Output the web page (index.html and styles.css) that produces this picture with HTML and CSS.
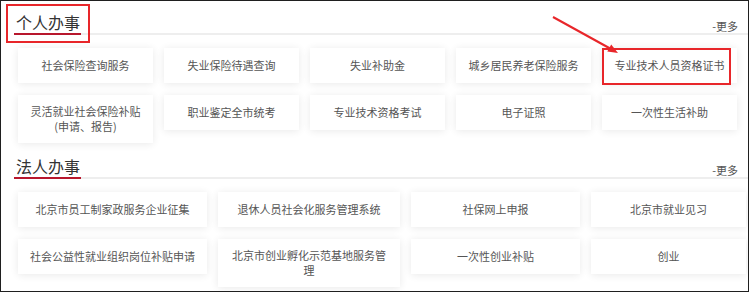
FILE: index.html
```html
<!DOCTYPE html>
<html lang="zh-CN">
<head>
<meta charset="utf-8">
<title>办事</title>
<link rel="stylesheet" href="styles.css">
</head>
<body>
<div class="frame">
  <section class="sec sec-1">
    <div class="sec-head">
      <h2 class="sec-title">个人办事</h2>
      <a class="more">-更多</a>
    </div>
    <div class="grid grid-5">
      <div class="card">社会保险查询服务</div>
      <div class="card">失业保险待遇查询</div>
      <div class="card">失业补助金</div>
      <div class="card">城乡居民养老保险服务</div>
      <div class="card">专业技术人员资格证书</div>
      <div class="card">灵活就业社会保险补贴<br>(申请、报告)</div>
      <div class="card">职业鉴定全市统考</div>
      <div class="card">专业技术资格考试</div>
      <div class="card">电子证照</div>
      <div class="card">一次性生活补助</div>
    </div>
  </section>
  <section class="sec sec-2">
    <div class="sec-head">
      <h2 class="sec-title">法人办事</h2>
      <a class="more">-更多</a>
    </div>
    <div class="grid grid-4">
      <div class="card">北京市员工制家政服务企业征集</div>
      <div class="card">退休人员社会化服务管理系统</div>
      <div class="card">社保网上申报</div>
      <div class="card">北京市就业见习</div>
      <div class="card">社会公益性就业组织岗位补贴申请</div>
      <div class="card">北京市创业孵化示范基地服务管<br>理</div>
      <div class="card">一次性创业补贴</div>
      <div class="card">创业</div>
    </div>
  </section>
  <div class="mark mark-title"></div>
  <div class="mark mark-card"></div>
  <svg class="arrow" width="747" height="290" viewBox="0 0 747 290">
    <line x1="552" y1="16" x2="610" y2="48" stroke="#e8262a" stroke-width="2"/>
    <polygon points="617,52 606.3,50.6 610.2,43.6" fill="#e8262a"/>
  </svg>
</div>
</body>
</html>
```
FILE: styles.css
```css
html, body {
  margin: 0;
  padding: 0;
  background: #fff;
}
body {
  font-family: "Noto Sans CJK SC", "Noto Sans", sans-serif;
}
.frame {
  position: relative;
  width: 734px;
  height: 290px;
  padding-left: 13px;
  border: 1px solid #1f1f1f;
  background: #fff;
  overflow: hidden;
}
.sec-1 {
  margin-top: 12px;
}
.sec-2 {
  margin-top: 14px;
}
.sec-head {
  display: flex;
  justify-content: space-between;
  align-items: flex-end;
  border-bottom: 2px solid #eeeeee;
  padding-right: 10px;
}
.sec-title {
  margin: 0 0 -2px 0;
  padding: 0 1px 2px 2px;
  font-size: 16px;
  line-height: 18px;
  font-weight: normal;
  color: #333;
  border-bottom: 2px solid #b8172d;
}
.more {
  font-size: 11px;
  line-height: 14px;
  color: #555;
  text-decoration: none;
}
.grid {
  display: grid;
  gap: 12px 11px;
  align-items: start;
  margin: 13px 0 0 4px;
}
.grid-5 {
  grid-template-columns: repeat(5, 135px);
}
.grid-4 {
  grid-template-columns: 189px 182px 169px 155px;
}
.card {
  box-sizing: border-box;
  min-height: 35px;
  padding: 9px 10px;
  display: flex;
  align-items: center;
  justify-content: center;
  text-align: center;
  background: #fff;
  box-shadow: 0 1px 8px rgba(0, 0, 0, 0.09);
  font-size: 11px;
  line-height: 15px;
  color: #555;
}
.mark {
  position: absolute;
  box-sizing: border-box;
  border: 2px solid #e8262a;
}
.mark-title {
  left: 5px;
  top: 3px;
  width: 84px;
  height: 39px;
}
.mark-card {
  left: 601px;
  top: 47px;
  width: 129px;
  height: 37px;
}
.arrow {
  position: absolute;
  left: 0;
  top: 0;
  pointer-events: none;
}
```
